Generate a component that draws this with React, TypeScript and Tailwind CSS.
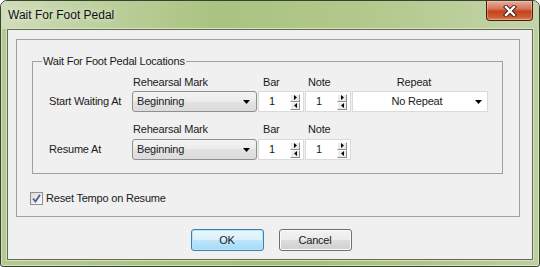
import { ReactNode } from 'react'

function DownArrow() {
  return (
    <svg width="7" height="4" viewBox="0 0 7 4" className="shrink-0">
      <polygon points="0,0 7,0 3.5,4" fill="#000" />
    </svg>
  )
}

function SpinBtn({ dir }: { dir: 'right' | 'left' }) {
  return (
    <div className="flex h-[8px] w-[10px] items-center justify-center border border-t-white border-l-white border-r-[#8d8d8d] border-b-[#8d8d8d] bg-[#ececec]">
      <svg width="3" height="5" viewBox="0 0 3 5">
        {dir === 'right' ? <polygon points="0,0 3,2.5 0,5" fill="#000" /> : <polygon points="3,0 0,2.5 3,5" fill="#000" />}
      </svg>
    </div>
  )
}

function Spin({ value }: { value: string }) {
  return (
    <div className="flex h-[21px] w-[46px] items-center border border-[#dadada] bg-white pr-[3px]">
      <span className="flex-1 pl-[10px]">{value}</span>
      <div className="flex flex-col">
        <SpinBtn dir="right" />
        <SpinBtn dir="left" />
      </div>
    </div>
  )
}

function Combo({ text }: { text: string }) {
  return (
    <div className="flex h-[21px] w-[125px] items-center rounded-[3px] border border-[#8e8f8f] bg-[linear-gradient(#f4f4f4,#ebebeb_50%,#e2e2e2_50%,#dcdcdc)] pl-[4px] pr-[6px]">
      <span className="flex-1">{text}</span>
      <DownArrow />
    </div>
  )
}

function Header({ children }: { children: ReactNode }) {
  return <div className="flex h-[14px] items-center leading-[14px]">{children}</div>
}

export default function App() {
  return (
    <div className="h-[267px] w-[540px] bg-white font-['Liberation_Sans',Arial,sans-serif] text-[11px] tracking-[-0.2px] text-[#1a1a1a]">
      <div className="relative flex h-[267px] w-[540px] flex-col rounded-t-[7px] rounded-b-[3px] border border-[#38432e] bg-[linear-gradient(90deg,#b5c992_0%,#a9c280_30%,#a4be78_55%,#afc589_80%,#bccf9e_100%)] shadow-[inset_0_0_0_1px_rgba(255,255,255,0.45)]">
        {/* title bar */}
        <div className="flex h-[28px] shrink-0 items-center rounded-t-[6px] bg-[linear-gradient(90deg,#d0ddbb_0%,#c0d2a2_15%,#aac380_40%,#b3c98d_70%,#c3d4a8_100%)] pl-[7px]">
          <span className="text-[12px] tracking-normal text-[#111] [text-shadow:0_0_6px_rgba(255,255,255,0.9)]">Wait For Foot Pedal</span>
        </div>
        <div className="absolute right-[6px] top-0 flex h-[20px] w-[47px] items-center justify-center rounded-b-[4px] border border-t-0 border-[#4d1d13] bg-[linear-gradient(#e9ae9b_0%,#d7765a_40%,#c2441f_55%,#cf5b33_85%,#e08a63_100%)] shadow-[inset_0_0_0_1px_rgba(255,220,200,0.35)]">
          <svg width="14" height="12" viewBox="0 0 14 12">
            <path d="M3 2 L11 10 M11 2 L3 10" stroke="#3a1a12" strokeWidth="4.2" strokeLinecap="square" />
            <path d="M3 2 L11 10 M11 2 L3 10" stroke="#fff" strokeWidth="2.4" strokeLinecap="square" />
          </svg>
        </div>

        {/* client area */}
        <div className="mx-[6px] flex h-[231px] shrink-0 flex-col border border-[#5f6c52] bg-[#f0f0f0] shadow-[0_0_0_1px_#d6e2c3]">
          <div className="ml-[8px] mt-[9px] flex h-[178px] w-[504px] flex-col border border-[#a0a0a0]">
            {/* inner group */}
            <div className="relative ml-[15px] mt-[21px] flex h-[113px] w-[471px] flex-col border border-[#a0a0a0]">
              <span className="absolute -top-[8px] left-[9px] bg-[#f0f0f0] px-[1px] leading-[14px]">Wait For Foot Pedal Locations</span>

              <div className="mt-[13px] flex">
                <div className="w-[99px]" />
                <div className="w-[125px] pl-[1px]"><Header>Rehearsal Mark</Header></div>
                <div className="ml-[1px] w-[46px] pl-[5px]"><Header>Bar</Header></div>
                <div className="ml-[1px] w-[46px] pl-[3px]"><Header>Note</Header></div>
                <div className="ml-[1px] flex w-[136px] justify-center pr-[12px]"><Header>Repeat</Header></div>
              </div>
              <div className="mt-[2px] flex items-center">
                <div className="w-[99px] pl-[16px]">Start Waiting At</div>
                <Combo text="Beginning" />
                <div className="ml-[1px]"><Spin value="1" /></div>
                <div className="ml-[1px]"><Spin value="1" /></div>
                <div className="ml-[1px] flex h-[21px] w-[136px] items-center border border-[#dadada] bg-white pr-[5px]">
                  <span className="flex-1 pl-[6px] text-center">No Repeat</span>
                  <DownArrow />
                </div>
              </div>

              <div className="mt-[10px] flex">
                <div className="w-[99px]" />
                <div className="w-[125px] pl-[1px]"><Header>Rehearsal Mark</Header></div>
                <div className="ml-[1px] w-[46px] pl-[5px]"><Header>Bar</Header></div>
                <div className="ml-[1px] w-[46px] pl-[3px]"><Header>Note</Header></div>
              </div>
              <div className="mt-[3px] flex items-center">
                <div className="w-[99px] pl-[16px]">Resume At</div>
                <Combo text="Beginning" />
                <div className="ml-[1px]"><Spin value="1" /></div>
                <div className="ml-[1px]"><Spin value="1" /></div>
              </div>
            </div>

            {/* checkbox */}
            <div className="ml-[13px] mt-[17px] flex h-[15px] items-center gap-[3px]">
              <div className="flex h-[13px] w-[13px] items-center justify-center border border-[#8f8f8f] bg-[linear-gradient(135deg,#dcdcdc,#fbfbfb)]">
                <svg width="9" height="9" viewBox="0 0 9 9">
                  <path d="M1 4.5 L3.5 7.5 L8 0.8" stroke="#4c5f8c" strokeWidth="1.8" fill="none" />
                </svg>
              </div>
              <span>Reset Tempo on Resume</span>
            </div>
          </div>

          {/* buttons */}
          <div className="mt-[12px] flex justify-center gap-[15px] pl-[2px]">
            <button className="h-[22px] w-[73px] rounded-[3px] border border-[#3c7fb1] bg-[linear-gradient(#eaf6fd,#d9f0fc_50%,#bee6fd_50%,#a7d9f5)] shadow-[inset_0_0_0_1px_#b6e4f9]">OK</button>
            <button className="h-[22px] w-[73px] rounded-[3px] border border-[#707070] bg-[linear-gradient(#f2f2f2,#ebebeb_50%,#dddddd_50%,#cfcfcf)] shadow-[inset_0_0_0_1px_#fbfbfb]">Cancel</button>
          </div>
        </div>
      </div>
    </div>
  )
}
